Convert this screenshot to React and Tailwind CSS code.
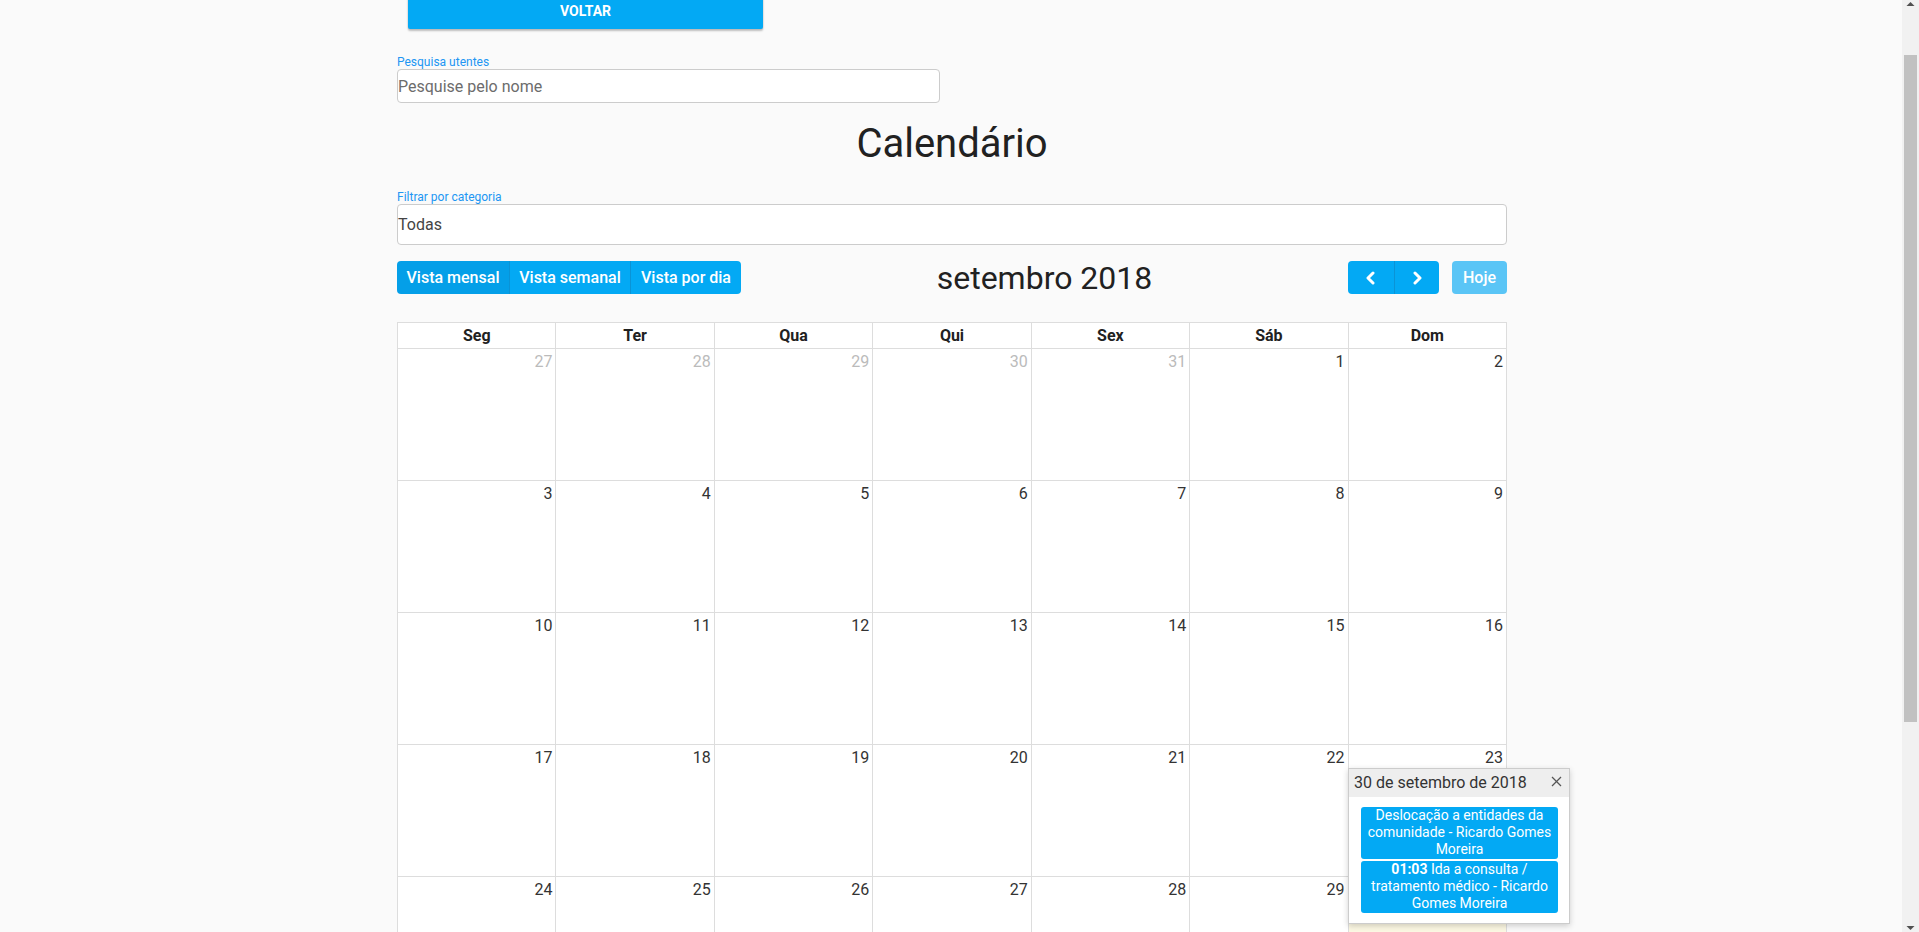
import React, { useEffect } from 'react';

const weekDays = ['Seg', 'Ter', 'Qua', 'Qui', 'Sex', 'Sáb', 'Dom'];

// semanas visíveis na vista mensal (setembro 2018)
const weeks = [
  [27, 28, 29, 30, 31, 1, 2],
  [3, 4, 5, 6, 7, 8, 9],
  [10, 11, 12, 13, 14, 15, 16],
  [17, 18, 19, 20, 21, 22, 23],
  [24, 25, 26, 27, 28, 29, 30],
  [1, 2, 3, 4, 5, 6, 7],
];

const isOtherMonth = (w, i) => (w === 0 && i < 5) || w === 5;

const Chevron = ({ dir }) => (
  <svg width="12" height="14" viewBox="0 0 12 14" fill="none">
    <polyline
      points={dir === 'left' ? '8,2 3,7 8,12' : '4,2 9,7 4,12'}
      stroke="white"
      strokeWidth="3"
      strokeLinecap="round"
      strokeLinejoin="round"
    />
  </svg>
);

// barra de scroll da janela (a página está ligeiramente rolada)
const ScrollBar = () => (
  <div className="fixed top-0 right-0 w-[17px] h-screen bg-[#f1f1f1] z-20">
    <svg width="17" height="17" viewBox="0 0 17 17" className="absolute top-0 left-0">
      <polygon points="4.5,6 12.5,6 8.5,2" fill="#505050" />
    </svg>
    <div className="absolute left-[2px] w-[13px] top-[55px] h-[667px] bg-[#c1c1c1]" />
    <svg width="17" height="17" viewBox="0 0 17 17" className="absolute bottom-0 left-0">
      <polygon points="4.5,11 12.5,11 8.5,15" fill="#505050" />
    </svg>
  </div>
);

const DayPopover = () => (
  <div className="absolute top-[445px] left-[950px] w-[222px] bg-white border border-[#ccc] shadow-[0_2px_6px_rgba(0,0,0,0.18)] z-10">
    <div className="h-[28px] bg-[#eeeeee] flex items-center justify-between pl-[5px] pr-[7px]">
      <span className="text-[16px] text-[#333]">30 de setembro de 2018</span>
      <svg width="11" height="11" viewBox="0 0 11 11" className="mb-[3px]">
        <line x1="1" y1="1" x2="10" y2="10" stroke="#555" strokeWidth="1.2" />
        <line x1="10" y1="1" x2="1" y2="10" stroke="#555" strokeWidth="1.2" />
      </svg>
    </div>
    <div className="pt-[10px] pb-[10px] pl-[12px] pr-[11px] flex flex-col gap-[2px]">
      <div className="bg-[#03a9f4] rounded-[3px] text-white text-[14px] leading-[17px] text-center px-[2px] pb-px">
        Deslocação a entidades da comunidade - Ricardo Gomes Moreira
      </div>
      <div className="bg-[#03a9f4] rounded-[3px] text-white text-[14px] leading-[17px] text-center px-[2px] pb-px">
        <span className="font-bold">01:03</span> Ida a consulta / tratamento médico - Ricardo Gomes Moreira
      </div>
    </div>
  </div>
);

export default function App() {
  useEffect(() => {
    window.scrollTo(0, 53);
  }, []);

  return (
    <div className="min-h-screen bg-[#fafafa] font-['Roboto',sans-serif] text-[#212121] pr-[15px]">
      <div className="w-[1110px] mx-auto pt-[46px] pb-[61px]">
        {/* voltar */}
        <div className="pl-[11px]">
          <button className="w-[355px] h-[36px] bg-[#03a9f4] text-white text-[14px] font-bold uppercase rounded-[2px] shadow-[0_2px_2px_rgba(0,0,0,0.24),0_0_2px_rgba(0,0,0,0.12)]">
            Voltar
          </button>
        </div>

        {/* pesquisa */}
        <div className="mt-[27px] text-[12px] leading-[13px] text-[#2196f3]">Pesquisa utentes</div>
        <input
          className="w-[543px] h-[34px] bg-white border border-[#ccc] rounded-[4px] px-0 text-[16px] text-[#444] placeholder:text-[#6c6c6c] outline-none"
          placeholder="Pesquise pelo nome"
        />

        <h1 className="mt-[17px] text-[40px] leading-[48px] text-center text-[#212121]">Calendário</h1>

        {/* filtro */}
        <div className="mt-[23px] text-[12px] leading-[13px] text-[#2196f3]">Filtrar por categoria</div>
        <div className="h-[41px] bg-white border border-[#ccc] rounded-[4px] flex items-center text-[16px] text-[#444]">
          Todas
        </div>

        {/* toolbar */}
        <div className="mt-[16px] h-[33px] flex items-center">
          <div className="flex rounded-[4px] overflow-hidden h-[33px] text-white text-[16px] font-medium">
            <div className="w-[112px] flex items-center justify-center bg-[#049fe8]">Vista mensal</div>
            <div className="w-[121px] flex items-center justify-center bg-[#03a9f4] border-l border-[#0a93d6]">Vista semanal</div>
            <div className="w-[111px] flex items-center justify-center bg-[#03a9f4] border-l border-[#0a93d6]">Vista por dia</div>
          </div>
          <div className="flex-1 text-center text-[32px] leading-[38px] text-[#212121]">setembro 2018</div>
          <div className="flex items-center gap-[13px]">
            <div className="flex rounded-[4px] overflow-hidden h-[33px]">
              <div className="w-[46px] flex items-center justify-center bg-[#03a9f4]">
                <Chevron dir="left" />
              </div>
              <div className="w-[45px] flex items-center justify-center bg-[#03a9f4] border-l border-[#0a93d6]">
                <Chevron dir="right" />
              </div>
            </div>
            <div className="w-[55px] h-[33px] rounded-[4px] bg-[#5ac5f6] text-white text-[16px] font-medium flex items-center justify-center">
              Hoje
            </div>
          </div>
        </div>

        {/* calendário */}
        <div className="relative mt-[28px] bg-white border-l border-t border-[#ddd]">
          <div className="grid grid-cols-7">
            {weekDays.map((d) => (
              <div
                key={d}
                className="h-[26px] flex items-center justify-center border-r border-b border-[#ddd] text-[16px] font-bold text-[#212121]"
              >
                {d}
              </div>
            ))}
          </div>
          {weeks.map((week, w) => (
            <div key={w} className="grid grid-cols-7">
              {week.map((d, i) => (
                <div
                  key={i}
                  className={`h-[132px] border-r border-b border-[#ddd] text-right pr-[3px] pt-[3px] text-[16px] leading-[20px] ${
                    w === 4 && i === 6 ? 'bg-[#fcf8e3]' : 'bg-white'
                  } ${isOtherMonth(w, i) ? 'text-[#bbb]' : 'text-[#333]'}`}
                >
                  {d}
                </div>
              ))}
            </div>
          ))}
          <DayPopover />
        </div>
      </div>
      <ScrollBar />
    </div>
  );
}
